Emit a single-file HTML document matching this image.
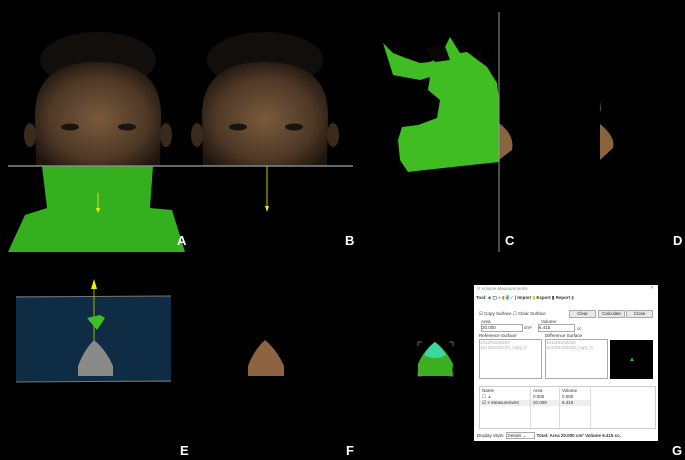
<!DOCTYPE html>
<html><head><style>
body{margin:0;width:685px;height:460px;background:#000;overflow:hidden;position:relative;font-family:"Liberation Sans",sans-serif}
.l{position:absolute;color:#fff;font-weight:bold;font-size:13px}
.a{position:absolute}
.d{position:absolute;left:474px;top:285px;width:184px;height:156px;background:#fff;font-size:4.5px;color:#333;font-family:"Liberation Sans",sans-serif}
.d div{position:absolute;white-space:nowrap}
.bx{border:1px solid #aaa;background:#fff}
.bt{border:1px solid #aaa;background:#e8e8e8;text-align:center;line-height:6px}
</style></head><body>
<svg class="a" style="left:0;top:0" width="685" height="460">
<defs>
<radialGradient id="sk" cx="50%" cy="55%" r="60%"><stop offset="0" stop-color="#7a5a3c"/><stop offset="0.65" stop-color="#4e3826"/><stop offset="1" stop-color="#1e150e"/></radialGradient>
</defs>
<!-- A face -->
<ellipse cx="98" cy="60" rx="58" ry="28" fill="#120e0b"/>
<path d="M35 115 Q35 62 98 62 Q161 62 161 115 L160 166 L36 166 Z" fill="url(#sk)"/>
<ellipse cx="30" cy="135" rx="6" ry="12" fill="#3a2a1c"/><ellipse cx="166" cy="135" rx="6" ry="12" fill="#3a2a1c"/>
<ellipse cx="70" cy="127" rx="9" ry="3.5" fill="#1a1410"/><ellipse cx="127" cy="127" rx="9" ry="3.5" fill="#1a1410"/>
<path d="M42 166 L153 166 L150 208 L172 210 L185 252 L8 252 L25 215 L47 208 Z" fill="#34b01e"/>
<line x1="98" y1="193" x2="98" y2="210" stroke="#dd0" stroke-width="1"/><path d="M96 208 L100 208 L98 213Z" fill="#ee0"/>
<!-- B face -->
<ellipse cx="265" cy="60" rx="58" ry="28" fill="#120e0b"/>
<path d="M202 115 Q202 62 265 62 Q328 62 328 115 L327 166 L203 166 Z" fill="url(#sk)"/>
<ellipse cx="197" cy="135" rx="6" ry="12" fill="#3a2a1c"/><ellipse cx="333" cy="135" rx="6" ry="12" fill="#3a2a1c"/>
<ellipse cx="238" cy="127" rx="9" ry="3.5" fill="#1a1410"/><ellipse cx="294" cy="127" rx="9" ry="3.5" fill="#1a1410"/>
<line x1="267" y1="166" x2="267" y2="208" stroke="#cc0" stroke-width="1"/><path d="M265 206 L269 206 L267 212Z" fill="#ee0"/>
<line x1="8" y1="166" x2="353" y2="166" stroke="#888" stroke-width="1.5"/>
<!-- C -->
<path d="M383 43 L393 53 L403 57 L420 63 L430 62 L440 57 L450 37 L460 53 L467 52 L487 67 L497 83 L499 100 L499 162 L425 170 L408 172 L400 160 L398 140 L402 127 L418 125 L437 118 L440 100 L428 90 L430 77 L420 80 L393 75 Z" fill="#3fbd22"/>
<path d="M425 48 L445 46 L450 60 L435 62Z" fill="#0a0805"/>
<path d="M499 123 Q515 135 512 150 L499 160Z" fill="#8a6440"/>
<line x1="499" y1="12" x2="499" y2="252" stroke="#999" stroke-width="1"/>
<path d="M600 100 L601 112 L600 110Z M600 124 Q616 137 613 148 L600 160Z" fill="#8a6440"/>
<!-- E -->
<rect x="16" y="296" width="155" height="86" fill="#0e2d45"/>
<line x1="16" y1="297" x2="171" y2="296" stroke="#777" stroke-width="1"/>
<line x1="16" y1="382" x2="171" y2="381" stroke="#777" stroke-width="1"/>
<line x1="94" y1="283" x2="94" y2="340" stroke="#aa0" stroke-width="1"/><path d="M91 289 L97 289 L94 279Z" fill="#ee0"/>
<path d="M87 318 L100 315 L105 318 L97 330 Z" fill="#3cc024"/>
<path d="M94 340 Q106 350 113 366 L113 376 L78 376 L78 366 Q84 350 94 340Z" fill="#8a8a88"/>
<path d="M265 340 Q277 350 284 366 L284 376 L248 376 L248 366 Q254 350 265 340Z" fill="#8e6440"/>
<path d="M435 342 Q446 350 453 364 L452 376 L418 376 L418 364 Q424 350 435 342Z" fill="#3cb020"/>
<path d="M435 342 Q441 346 446 355 Q435 361 424 355 Q429 346 435 342Z" fill="#3ad7a0"/>
<path d="M418 346 v-4 h4 M449 342 h4 v4 M418 372 v4 h4 M449 376 h4 v-4" stroke="#888" fill="none" stroke-width="0.8"/>
</svg>
<div class="l" style="left:177px;top:233px">A</div>
<div class="l" style="left:345px;top:233px">B</div>
<div class="l" style="left:505px;top:233px">C</div>
<div class="l" style="left:673px;top:233px">D</div>
<div class="l" style="left:180px;top:443px">E</div>
<div class="l" style="left:346px;top:443px">F</div>
<div class="l" style="left:672px;top:443px">G</div>
<div class="d">
<div style="left:3px;top:1px;color:#888">⚲ Volume Measurements</div><div style="left:176px;top:0px;color:#888">✕</div>
<div style="left:2px;top:10px;font-weight:bold">Tool: <span style="color:#4a4">◆</span> ▢ <span style="color:#4ac">●</span> <span style="color:#c80">▮</span> <span style="background:#9cf;color:#4a4">■</span> <span style="color:#4ad">✓</span> | Import <span style="color:#dc0">▮</span> Export <span style="color:#446">▮</span> Report <span style="color:#68c">▮</span></div>
<div style="left:5px;top:26px">☑ Copy Surface ☐ Clear Surface</div>
<div class="bt" style="left:95px;top:25px;width:25px;height:6px">Clear</div>
<div class="bt" style="left:124px;top:25px;width:25px;height:6px">Calculate</div>
<div class="bt" style="left:152px;top:25px;width:25px;height:6px">Close</div>
<div style="left:7px;top:34px">Area</div><div class="bx" style="left:7px;top:39px;width:40px;height:6px;line-height:6px">20.000</div><div style="left:50px;top:40px">cm²</div>
<div style="left:67px;top:34px">Volume</div><div class="bx" style="left:64px;top:39px;width:35px;height:6px;line-height:6px">6.415</div><div style="left:103px;top:41px">cc</div>
<div style="left:5px;top:48px">Reference Surface</div>
<div class="bx" style="left:5px;top:54px;width:61px;height:38px;color:#aaa">101201102220<br>101201102220_copy_0</div>
<div style="left:71px;top:48px">Difference Surface</div>
<div class="bx" style="left:71px;top:54px;width:61px;height:38px;color:#aaa">101201102220<br>101201102220_copy_0</div>
<div style="left:136px;top:55px;width:43px;height:39px;background:#000"><span style="position:absolute;left:19px;top:17px;color:#3c3;font-size:6px">▲</span></div>
<div class="bx" style="left:5px;top:101px;width:175px;height:41px;border-color:#ccc">
<div style="left:2px;top:1px">Name</div><div style="left:53px;top:1px">Area</div><div style="left:82px;top:1px">Volume</div>
<div style="left:2px;top:7px">☐ <span style="color:#4a4">▲</span></div><div style="left:53px;top:7px">0.000</div><div style="left:82px;top:7px">0.000</div>
<div style="left:0;top:13px;width:110px;height:6px;background:#eee"></div>
<div style="left:2px;top:13px">☑ <span style="color:#48c">●</span> Measurement</div><div style="left:53px;top:13px">20.000</div><div style="left:82px;top:13px">6.415</div>
<div style="left:50px;top:0;width:1px;height:41px;background:#ddd"></div><div style="left:79px;top:0;width:1px;height:41px;background:#ddd"></div><div style="left:110px;top:0;width:1px;height:41px;background:#ddd"></div>
</div>
<div style="left:3px;top:148px">Display Style: <span class="bx" style="padding:0 8px 0 1px">Details ⌄</span> <b>Total: Area 20.000 cm² Volume 6.415 cc.</b></div>
</div>
</body></html>
